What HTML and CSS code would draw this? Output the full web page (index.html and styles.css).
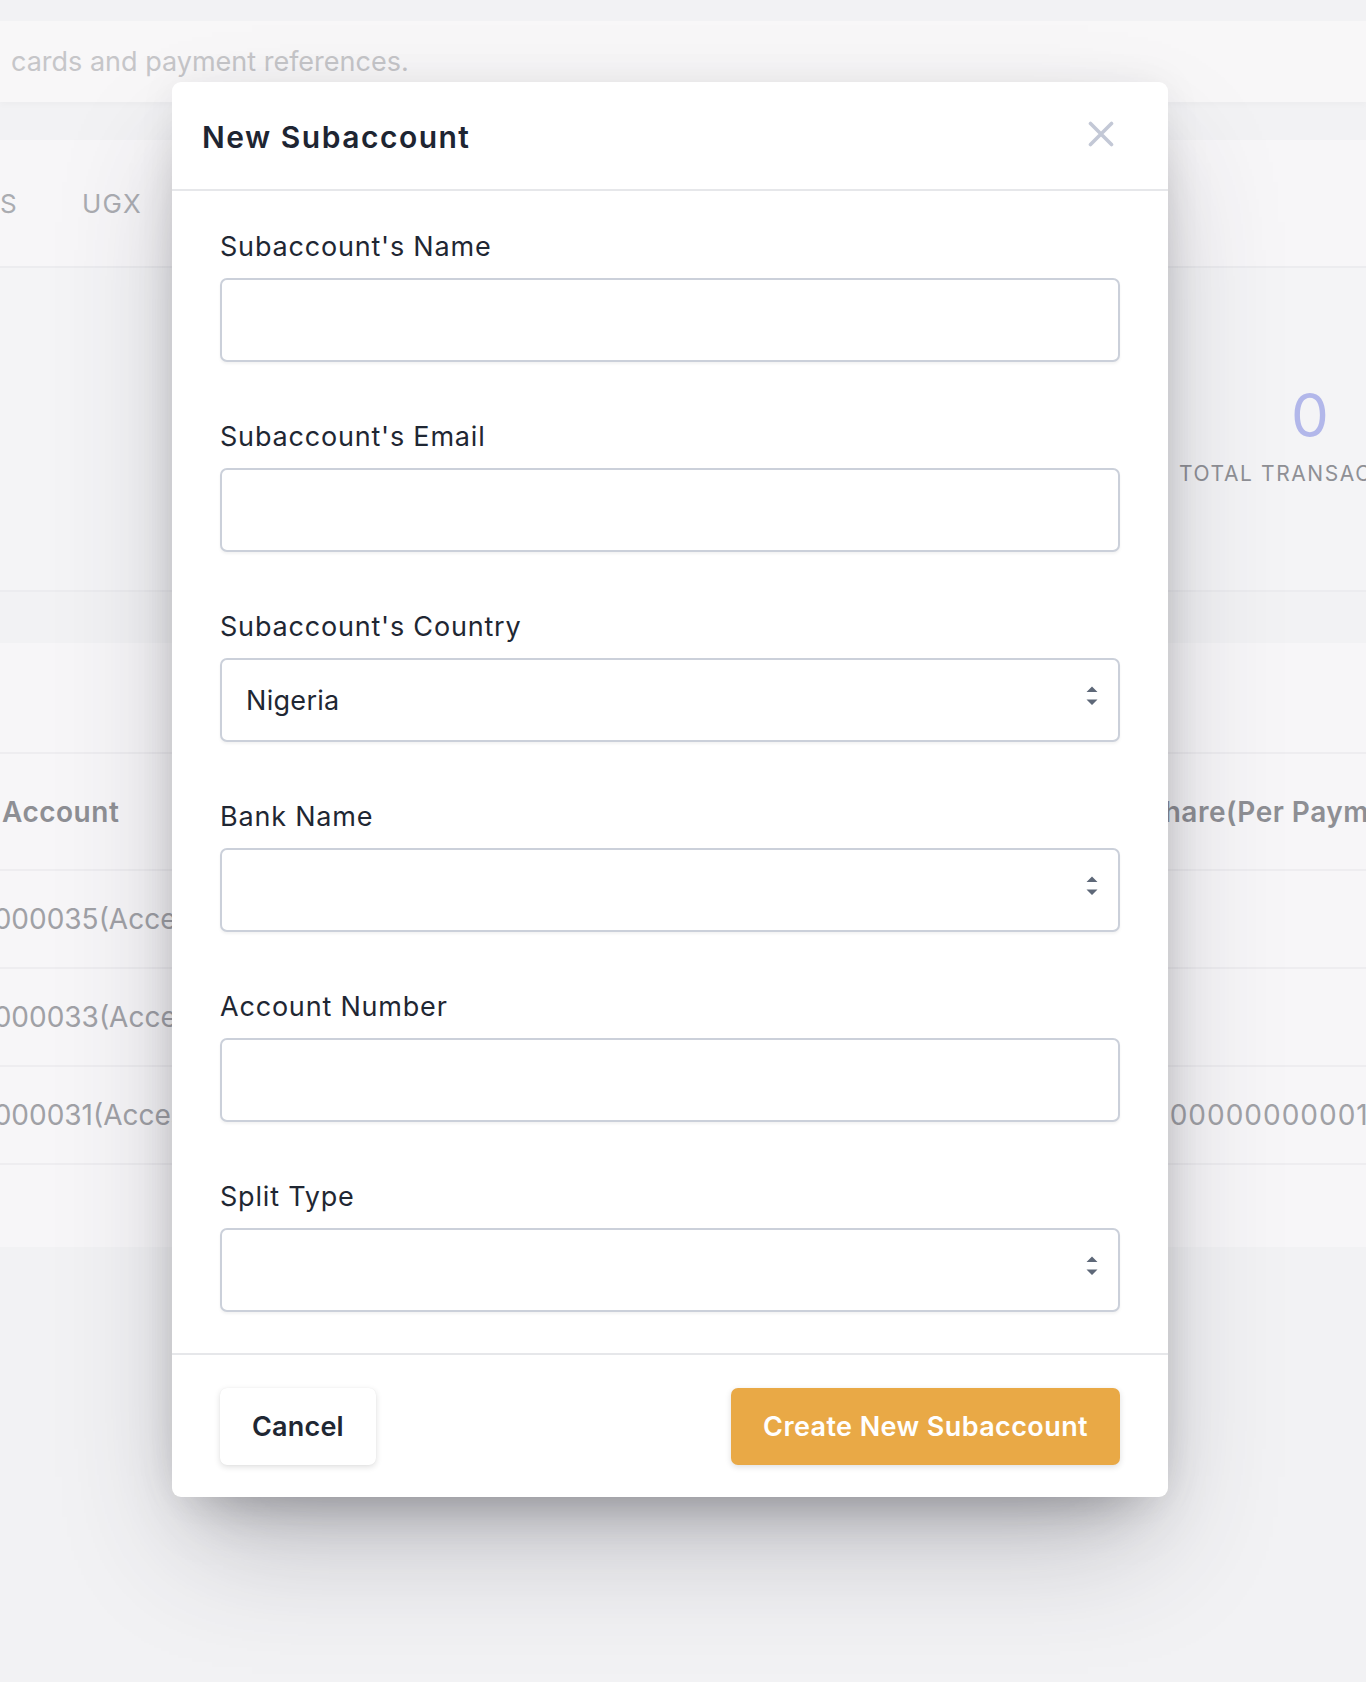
FILE: index.html
```html
<!DOCTYPE html>
<html lang="en">
<head>
<meta charset="utf-8">
<title>New Subaccount</title>
<link rel="stylesheet" href="styles.css">
</head>
<body>
<div class="page">
  <div class="desc-card"><span class="desc-text">cards and payment references.</span></div>

  <div class="summary-card">
    <div class="tabs">
      <span class="tab">S</span>
      <span class="tab">UGX</span>
    </div>
    <div class="stats">
      <div class="stat">
        <div class="stat-num">0</div>
        <div class="stat-label">TOTAL TRANSACTIONS</div>
      </div>
    </div>
  </div>

  <div class="table-card">
    <div class="toolbar"></div>
    <div class="trow thead">
      <div class="cell">Account</div>
      <div class="cell">Share(Per Payment)</div>
    </div>
    <div class="trow">
      <div class="cell cell-cut">0000035(Access Bank)</div>
      <div class="cell"></div>
    </div>
    <div class="trow">
      <div class="cell cell-cut">0000033(Access Bank)</div>
      <div class="cell"></div>
    </div>
    <div class="trow">
      <div class="cell cell-cut">0000031(Access Bank)</div>
      <div class="cell cell-value">0000000000019%</div>
    </div>
    <div class="table-foot"></div>
  </div>
</div>

<div class="modal">
  <div class="modal-header">
    <h2 class="modal-title">New Subaccount</h2>
    <svg class="close-icon" width="26" height="26" viewBox="0 0 26 26" aria-label="Close">
      <path d="M2.5 2.5 L23.5 23.5 M23.5 2.5 L2.5 23.5" stroke="#c3c8d6" stroke-width="3.6" stroke-linecap="round" fill="none"/>
    </svg>
  </div>
  <div class="modal-body">
    <div class="field">
      <label class="label">Subaccount's Name</label>
      <input class="input" type="text">
    </div>
    <div class="field">
      <label class="label">Subaccount's Email</label>
      <input class="input" type="text">
    </div>
    <div class="field">
      <label class="label">Subaccount's Country</label>
      <div class="input select"><span>Nigeria</span>
        <svg class="arrows" width="12" height="20" viewBox="0 0 12 20"><path d="M0.5 6 L6 0.5 L11.5 6 Z M0.5 13.5 L11.5 13.5 L6 19 Z" fill="#5e6878"/></svg>
      </div>
    </div>
    <div class="field">
      <label class="label">Bank Name</label>
      <div class="input select"><span></span>
        <svg class="arrows" width="12" height="20" viewBox="0 0 12 20"><path d="M0.5 6 L6 0.5 L11.5 6 Z M0.5 13.5 L11.5 13.5 L6 19 Z" fill="#5e6878"/></svg>
      </div>
    </div>
    <div class="field">
      <label class="label">Account Number</label>
      <input class="input" type="text">
    </div>
    <div class="field">
      <label class="label">Split Type</label>
      <div class="input select"><span></span>
        <svg class="arrows" width="12" height="20" viewBox="0 0 12 20"><path d="M0.5 6 L6 0.5 L11.5 6 Z M0.5 13.5 L11.5 13.5 L6 19 Z" fill="#5e6878"/></svg>
      </div>
    </div>
  </div>
  <div class="modal-footer">
    <button class="btn btn-cancel">Cancel</button>
    <button class="btn btn-primary">Create New Subaccount</button>
  </div>
</div>
</body>
</html>
```

FILE: styles.css
```css
* { box-sizing: border-box; }

html, body {
  margin: 0;
  padding: 0;
}

body {
  width: 1366px;
  height: 1682px;
  overflow: hidden;
  background: #f2f2f4;
  font-family: Inter, "Noto Sans", sans-serif;
  color: #1f2733;
  position: relative;
}

.page {
  padding-top: 21px;
}

/* background description card */
.desc-card {
  height: 81px;
  background: #f8f7f8;
  display: flex;
  align-items: center;
  padding-left: 11px;
  box-shadow: 0 3px 6px rgba(0, 0, 0, 0.025);
}

.desc-text {
  font-size: 27px;
  color: #c6c6c9;
  white-space: nowrap;
}

/* summary card */
.summary-card {
  margin-top: 38px;
  background: #f7f6f8;
}

.tabs {
  height: 128px;
  border-bottom: 2px solid #ececef;
  display: flex;
  align-items: center;
  gap: 64px;
}

.tab {
  font-size: 26px;
  color: #aaacb1;
  letter-spacing: 1.2px;
}

.stats {
  height: 324px;
  background: #f4f4f6;
  padding-left: 1179px;
  padding-top: 117px;
  border-bottom: 2px solid #ececef;
}

.stat {
  width: 262px;
  text-align: center;
  white-space: nowrap;
}

.stat-num {
  font-size: 60px;
  line-height: 60px;
  color: #b2b7ea;
}

.stat-label {
  margin-top: 17px;
  font-size: 21px;
  line-height: 24px;
  letter-spacing: 1.6px;
  color: #8f9095;
  text-align: left;
}

/* table card */
.table-card {
  margin-top: 51px;
  background: #f7f6f8;
}

.toolbar {
  height: 111px;
  border-bottom: 2px solid #eeedf0;
}

.trow {
  display: grid;
  grid-template-columns: 1145px 1fr;
  align-items: center;
  height: 98px;
  border-bottom: 2px solid #eeedf0;
  font-size: 28px;
  color: #a0a1a6;
  white-space: nowrap;
}

.trow.thead {
  height: 117px;
  font-weight: 600;
  color: #8e8f94;
  letter-spacing: 0.5px;
}

.thead .cell:first-child {
  padding-left: 2px;
}

.cell-cut {
  margin-left: -24px;
}

.cell-value {
  padding-left: 6px;
  letter-spacing: 1px;
}

.table-foot {
  height: 82px;
}

/* modal */
.modal {
  position: absolute;
  top: 82px;
  left: 172px;
  width: 996px;
  background: #ffffff;
  border-radius: 9px;
  box-shadow: 0 60px 120px -20px rgba(50, 50, 70, 0.28), 0 30px 60px -30px rgba(0, 0, 0, 0.35), 0 0 40px rgba(0, 0, 0, 0.05);
}

.modal-header {
  height: 109px;
  border-bottom: 2px solid #e6e7ea;
  display: flex;
  align-items: center;
  justify-content: space-between;
  padding: 0 54px 4px 30px;
}

.modal-title {
  margin: 6px 0 0 0;
  font-size: 30px;
  font-weight: 600;
  letter-spacing: 1.5px;
  color: #1e2532;
}

.close-icon {
  display: block;
}

.modal-body {
  padding: 38px 48px 41px 48px;
  display: flex;
  flex-direction: column;
  gap: 57px;
}

.field {
  display: flex;
  flex-direction: column;
  gap: 13px;
}

.label {
  font-size: 27px;
  line-height: 36px;
  letter-spacing: 0.8px;
  color: #1f2733;
}

.input {
  display: block;
  width: 100%;
  height: 84px;
  border: 2px solid #cbd0da;
  border-radius: 7px;
  background: #ffffff;
  box-shadow: 0 2px 3px rgba(0, 0, 0, 0.05);
  font-family: inherit;
  font-size: 27px;
  color: #1f2733;
  padding: 0 24px;
  outline: none;
}

.select {
  display: flex;
  align-items: center;
  justify-content: space-between;
  padding: 0 20px 0 24px;
  letter-spacing: 0.3px;
}

.arrows {
  display: block;
  margin-bottom: 8px;
}

.modal-footer {
  height: 144px;
  border-top: 2px solid #e6e7ea;
  display: flex;
  align-items: center;
  justify-content: space-between;
  padding: 0 48px;
}

.btn {
  height: 77px;
  border: none;
  border-radius: 7px;
  padding: 0 32px;
  font-family: inherit;
  font-size: 27px;
  font-weight: 600;
  letter-spacing: 0.2px;
  cursor: pointer;
}

.btn-cancel {
  background: #ffffff;
  color: #1f2733;
  box-shadow: 0 2px 6px rgba(0, 0, 0, 0.13), 0 0 1px rgba(0, 0, 0, 0.08);
}

.btn-primary {
  background: #e9a946;
  color: #ffffff;
  letter-spacing: 0.4px;
  box-shadow: 0 2px 6px rgba(0, 0, 0, 0.13);
}
```
